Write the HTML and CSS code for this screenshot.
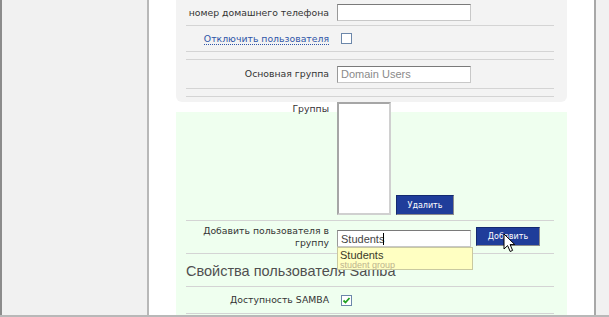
FILE: index.html
```html
<!DOCTYPE html>
<html lang="ru">
<head>
    <meta charset="UTF-8">
    <title>Пользователь</title>
    <link rel="stylesheet" href="styles.css">
</head>
<body>
    <div class="window">
        <div class="sidebar"></div>

        <div class="main">
            <div class="panel grey">
                <div class="row r25">
                    <div class="label">номер домашнего телефона</div>
                    <div class="field"><input class="text" type="text"></div>
                </div>
                <div class="row r25">
                    <div class="label"><a href="#" class="link">Отключить пользователя</a></div>
                    <div class="field"><span class="check"></span></div>
                </div>
                <div class="row spacer"></div>
                <div class="row r28">
                    <div class="label">Основная группа</div>
                    <div class="field"><input class="text" type="text" placeholder="Domain Users"></div>
                </div>
                <div class="row spacer"></div>
            </div>

            <div class="panel green">
                <div class="row groups">
                    <div class="label">Группы</div>
                    <div class="field">
                        <div class="listbox"></div>
                        <button class="btn">Удалить</button>
                    </div>
                </div>
                <div class="row r32">
                    <div class="label">Добавить пользователя в<br>группу</div>
                    <div class="field">
                        <div class="combo">
                            <input class="text" type="text" value="Students"><span class="caret"></span>
                            <div class="suggest">
                                <div class="s-name">Students</div>
                                <div class="s-desc">student group</div>
                            </div>
                        </div>
                        <div class="btn-wrap">
                            <button class="btn add-btn">Добавить</button>
                            <svg class="cursor" width="13" height="20" viewBox="0 0 13 20">
                                <path d="M1 1 L1 16 L4.6 12.6 L7.2 18.5 L9.6 17.4 L7.1 11.6 L11.8 11.6 Z" fill="#fff" stroke="#000" stroke-width="1" stroke-linejoin="round"/>
                            </svg>
                        </div>
                    </div>
                </div>
                <div class="row heading">
                    <h2>Свойства пользователя Samba</h2>
                </div>
                <div class="row r26">
                    <div class="label">Доступность SAMBA</div>
                    <div class="field">
                        <span class="check checked">
                            <svg width="9" height="9" viewBox="0 0 9 9"><path d="M1.5 4.5 L3.5 6.5 L7.5 2" fill="none" stroke="#21a121" stroke-width="1.8"/></svg>
                        </span>
                    </div>
                </div>
            </div>
        </div>

        <div class="rightbar"></div>
    </div>
</body>
</html>
```

FILE: styles.css
```css
html, body {
    margin: 0;
    padding: 0;
    background: #ffffff;
}
body {
    font-family: 'DejaVu Sans', Verdana, sans-serif;
    font-size: 9.3px;
    color: #333;
}
.window {
    display: flex;
    height: 315px;
    border-bottom: 2px solid #b8b8b8;
    overflow: hidden;
}
.sidebar {
    width: 145px;
    border-left: 2px solid #8c8c8c;
    border-right: 2px solid #b8b8b8;
    background: #f1f1f1;
}
.main {
    flex: 1;
    padding: 0 27px;
    background: #fff;
}
.rightbar {
    width: 13px;
    border-left: 2px solid #a8a8a8;
    background: #f1f1f1;
}
.panel {
    padding: 0 13px 0 10px;
}
.panel.grey {
    background: #f3f3f3;
    padding-bottom: 5px;
    border-radius: 0 0 6px 6px;
}
.panel.green {
    display: flow-root;
    background: #efffef;
    margin-top: 10px;
    height: 300px;
}
.row {
    display: grid;
    grid-template-columns: 143px 1fr;
    column-gap: 8px;
    align-items: center;
    border-bottom: 1px solid #d4d4d4;
}
.row.r25 { height: 25px; }
.row.r26 { height: 26px; }
.row.r28 { height: 28px; }
.row.r32 { height: 32px; }
.row.spacer { height: 7px; }
.label {
    text-align: right;
    line-height: 12px;
}
.field {
    display: flex;
    align-items: center;
}
.link {
    color: #2f55a8;
    text-decoration: none;
    border-bottom: 1px dotted #2f55a8;
}
.text {
    width: 134px;
    height: 17px;
    box-sizing: border-box;
    margin: 0;
    padding: 0 3px;
    border: 1px solid #999;
    border-top-color: #7a7a7a;
    border-right-color: #c8c8c8;
    border-bottom-color: #c8c8c8;
    background: #fff;
    font-family: 'Liberation Sans', Arial, sans-serif;
    font-size: 11px;
    color: #444;
    outline: none;
}
.text::placeholder {
    color: #8a8a8a;
}
.check {
    display: inline-flex;
    align-items: center;
    justify-content: center;
    width: 11px;
    height: 11px;
    box-sizing: border-box;
    margin-left: 4px;
    border: 1px solid #6c87aa;
    background: #fff;
}
.row.groups {
    margin-top: -10px;
    height: 118px;
    align-items: start;
}
.groups .label {
    padding-top: 1px;
}
.groups .field {
    align-items: flex-end;
    height: 113px;
}
.listbox {
    width: 54px;
    height: 113px;
    box-sizing: border-box;
    border: 2px solid #a6a6a6;
    border-right-color: #d0d0d0;
    border-bottom-color: #d0d0d0;
    background: #fff;
}
.btn {
    height: 20px;
    box-sizing: border-box;
    border: 1px solid #132a70;
    border-right-color: #8c8c8c;
    border-bottom-color: #8c8c8c;
    background: #1f3d9a;
    color: #fff;
    font-family: 'DejaVu Sans', Verdana, sans-serif;
    font-size: 8px;
    padding: 0;
    margin-left: 5px;
    width: 58px;
    cursor: pointer;
}
.combo {
    position: relative;
    display: flex;
    align-items: center;
    margin-top: 3px;
}
.caret {
    position: absolute;
    left: 46px;
    top: 3px;
    width: 1px;
    height: 12px;
    background: #000;
}
.suggest {
    position: absolute;
    left: 0;
    top: 17px;
    width: 136px;
    height: 23px;
    box-sizing: border-box;
    border: 1px solid #c9c9a0;
    background: #ffffc2;
    padding: 1px 2px;
    z-index: 2;
    font-family: 'Liberation Sans', Arial, sans-serif;
}
.s-name {
    font-size: 11px;
    line-height: 12px;
    color: #3a3a2a;
}
.s-desc {
    font-size: 9px;
    line-height: 9px;
    color: #bdb38e;
}
.btn-wrap {
    position: relative;
    margin-top: -2px;
}
.add-btn {
    width: 64px;
    height: 19px;
}
.cursor {
    position: absolute;
    left: 32px;
    top: 6px;
}
.row.heading {
    display: flex;
    align-items: center;
    height: 32px;
}
h2 {
    margin: 0;
    font-family: 'Liberation Sans', Arial, sans-serif;
    font-size: 14.5px;
    font-weight: normal;
    color: #505050;
    padding-top: 2px;
}
.check.checked svg {
    display: block;
}
```
